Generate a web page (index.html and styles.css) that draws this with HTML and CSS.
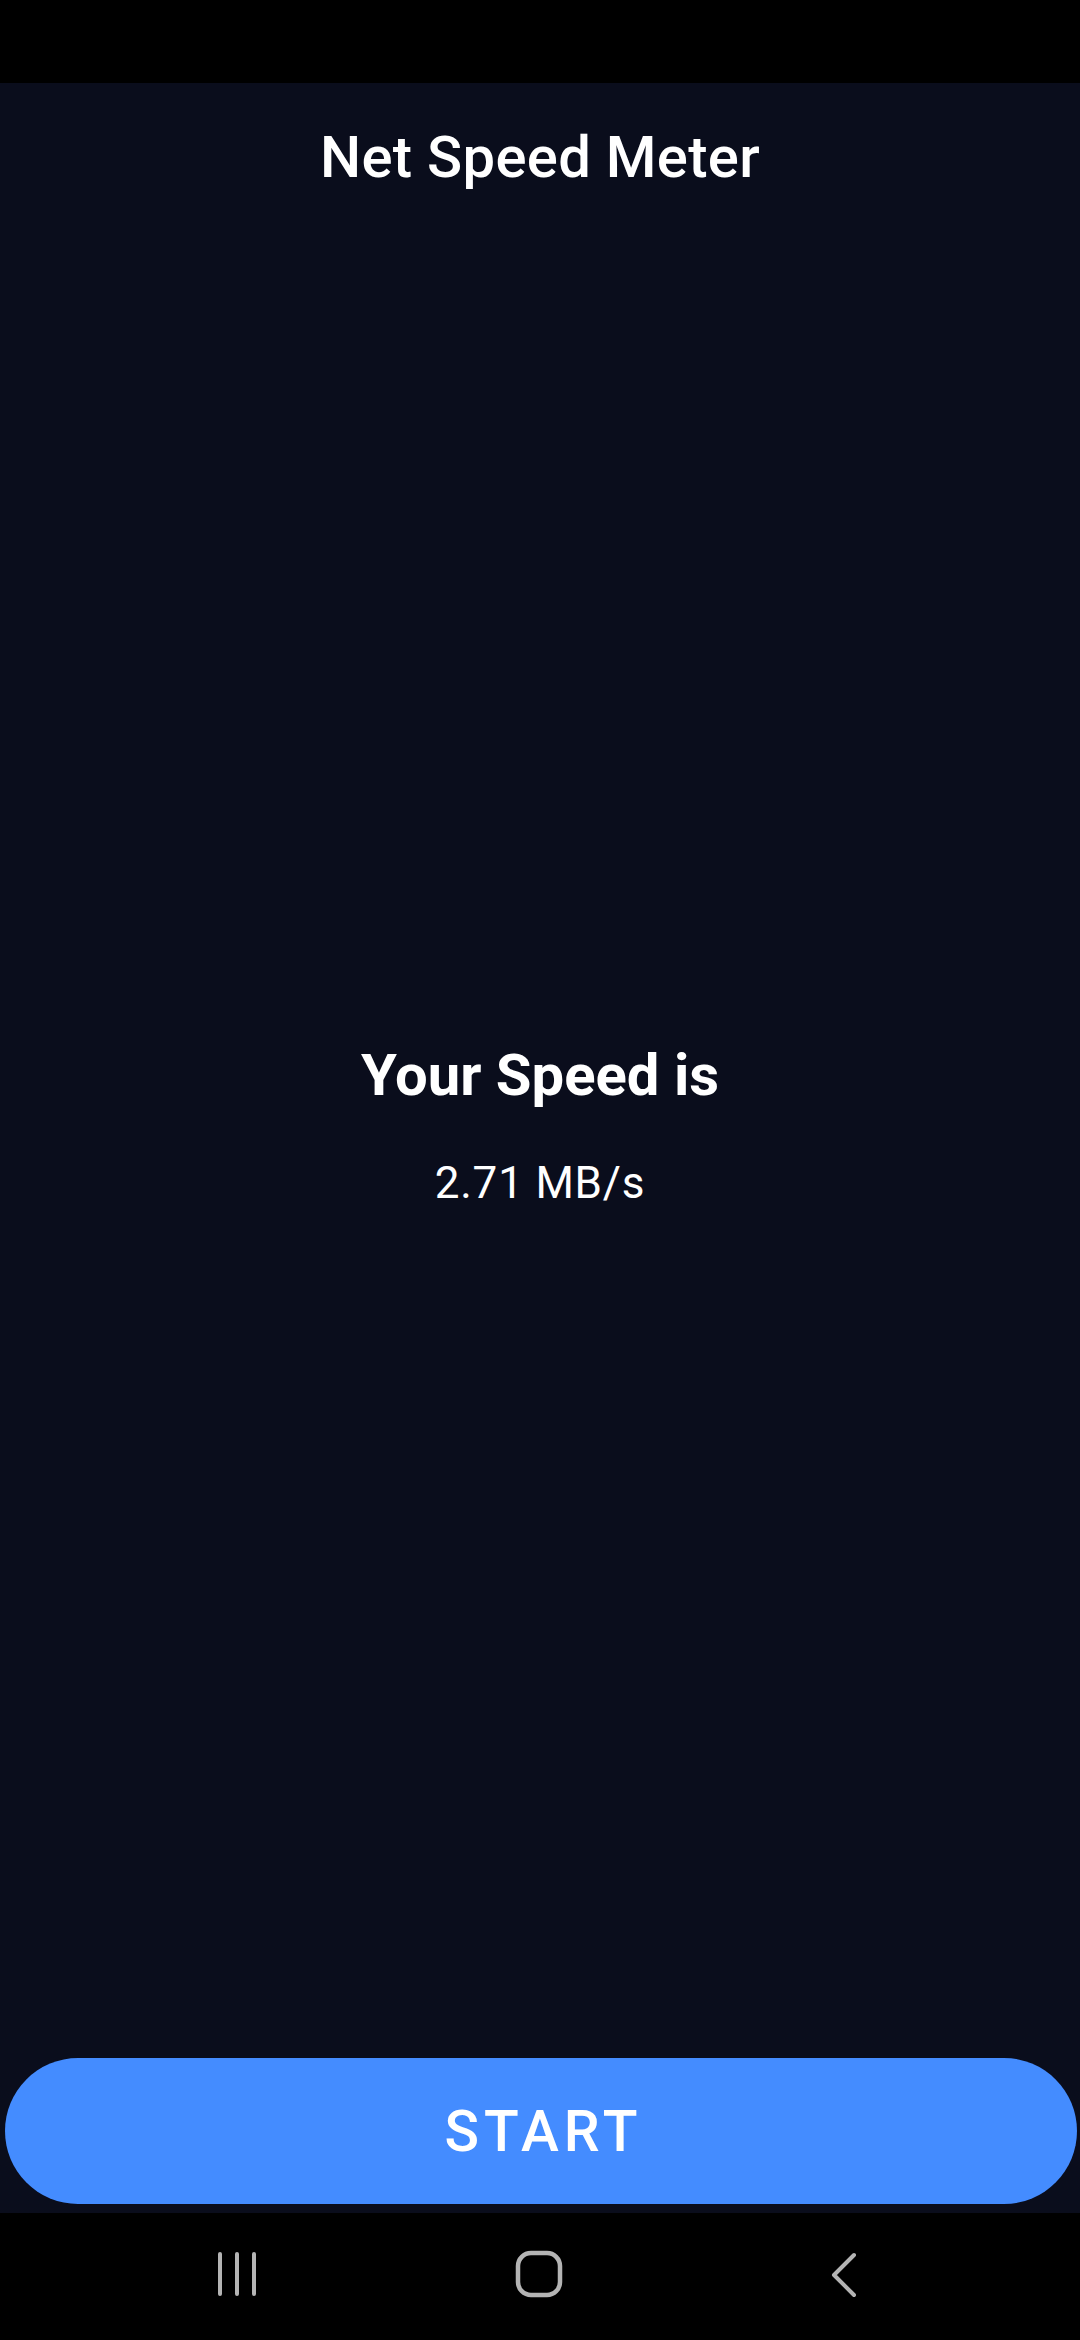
FILE: index.html
```html
<!DOCTYPE html>
<html>
<head>
<meta charset="utf-8">
<link rel="stylesheet" href="styles.css">
</head>
<body>
<div class="screen">
  <div class="status-bar"></div>
  <main class="app">
    <h1 class="title">Net Speed Meter</h1>
    <div class="result">
      <div class="result-label">Your Speed is</div>
      <div class="result-value">2.71 MB/s</div>
    </div>
    <div class="spacer"></div>
    <button class="start-btn">START</button>
  </main>
  <nav class="nav-bar">
    <svg class="nav-icon" width="40" height="44" viewBox="0 0 40 44">
      <path d="M3 2 V42 M20 2 V42 M37 2 V42" stroke="#b4b4b4" stroke-width="4" stroke-linecap="round" fill="none"/>
    </svg>
    <svg class="nav-icon" width="50" height="48" viewBox="0 0 50 48">
      <rect x="4" y="3" width="42" height="42" rx="13" ry="13" stroke="#b4b4b4" stroke-width="4.5" fill="none"/>
    </svg>
    <svg class="nav-icon" width="30" height="46" viewBox="0 0 30 46">
      <path d="M25 3 L5 23 L25 43" stroke="#b4b4b4" stroke-width="4" stroke-linecap="round" stroke-linejoin="round" fill="none"/>
    </svg>
  </nav>
</div>
</body>
</html>
```

FILE: styles.css
```css
html, body {
  margin: 0;
  padding: 0;
  background: #000;
}

.screen {
  width: 1080px;
  height: 2340px;
  display: flex;
  flex-direction: column;
  font-family: Roboto, "Noto Sans", sans-serif;
  color: #fff;
}

.status-bar {
  height: 83px;
  background: #000;
  flex: none;
}

.app {
  flex: 1;
  display: flex;
  flex-direction: column;
  align-items: center;
  background: #0a0d1c;
  padding-bottom: 9px;
}

.title {
  margin: 39px 0 0;
  font-size: 58px;
  line-height: 70px;
  font-weight: 500;
  letter-spacing: 0.3px;
}

.result {
  margin-top: 848px;
  display: flex;
  flex-direction: column;
  align-items: center;
}

.result-label {
  font-size: 58px;
  line-height: 70px;
  font-weight: 700;
}

.result-value {
  margin-top: 47px;
  font-size: 44px;
  line-height: 52px;
  font-weight: 400;
  letter-spacing: 0.8px;
}

.spacer {
  flex: 1;
}

.start-btn {
  align-self: flex-start;
  margin-left: 5px;
  width: 1072px;
  height: 146px;
  border: none;
  border-radius: 73px;
  background: #448cff;
  color: #fff;
  font-family: Roboto, "Noto Sans", sans-serif;
  font-size: 57px;
  font-weight: 500;
  letter-spacing: 5px;
  text-indent: 5px;
  padding: 0;
}

.nav-bar {
  height: 127px;
  background: #000;
  flex: none;
  display: flex;
  align-items: flex-start;
  padding-top: 39px;
  box-sizing: border-box;
}

.nav-icon:nth-child(1) {
  margin-left: 217px;
}

.nav-icon:nth-child(2) {
  margin-left: 257px;
  margin-top: -2px;
}

.nav-icon:nth-child(3) {
  margin-left: 265px;
}
```
